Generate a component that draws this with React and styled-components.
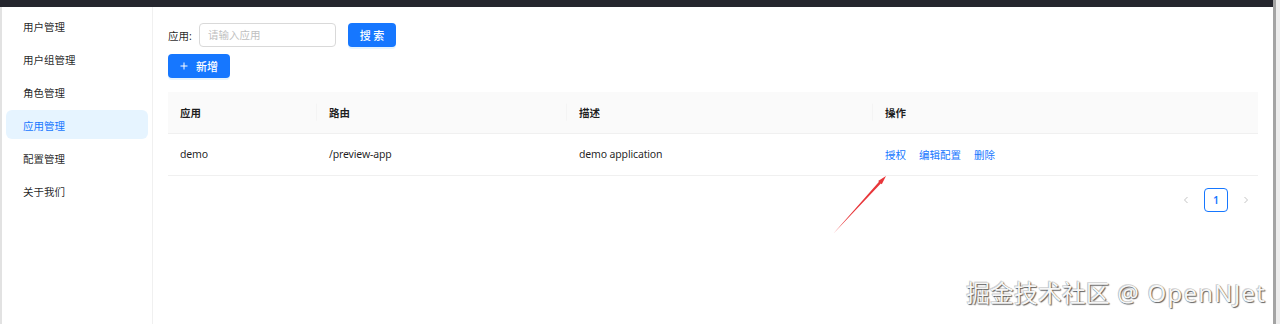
import React from "react";
import styled, { createGlobalStyle } from "styled-components";

const Global = createGlobalStyle`
  html, body { margin: 0; padding: 0; background: #fff; }
  body {
    font-family: "Noto Sans", "Noto Sans CJK SC", sans-serif;
    font-size: 10.5px;
    color: rgba(0,0,0,0.88);
  }
  * { box-sizing: border-box; }
`;

const Screen = styled.div`
  position: relative;
  display: flex;
  width: 1280px;
  height: 324px;
  overflow: hidden;
`;

const Window = styled.div`
  width: 1273px;
  display: flex;
  flex-direction: column;
`;

const RightEdge = styled.div`
  width: 7px;
  border-left: 3px solid #a4a4a4;
  background: #ededed;
`;

const TopBar = styled.div`
  height: 7px;
  background: #25262e;
`;

const Body = styled.div`
  flex: 1;
  display: flex;
  border-left: 2px solid #e2e2e2;
`;

const Sidebar = styled.nav`
  width: 151px;
  border-right: 1px solid #f0f0f0;
  padding: 4px 4px 0;
  display: flex;
  flex-direction: column;
  gap: 4px;
`;

const MenuItem = styled.div`
  height: 29px;
  display: flex;
  align-items: center;
  padding: 1px 0 0 17px;
  border-radius: 6px;
  font-size: 10.5px;
  color: ${(p) => (p.$active ? "#1677ff" : "rgba(0,0,0,0.88)")};
  background: ${(p) => (p.$active ? "#e6f4ff" : "transparent")};
`;

const Main = styled.main`
  flex: 1;
  padding: 16px 15px 0;
  display: flex;
  flex-direction: column;
`;

const SearchRow = styled.div`
  display: flex;
  align-items: center;
  height: 24px;
`;

const Label = styled.label`
  font-size: 10.5px;
  width: 31px;
  color: rgba(0,0,0,0.88);
`;

const Input = styled.div`
  width: 137px;
  height: 24px;
  border: 1px solid #d9d9d9;
  border-radius: 4px;
  padding-left: 8px;
  line-height: 22px;
  color: #bfbfbf;
  font-size: 10.5px;
`;

const Button = styled.button`
  display: inline-flex;
  align-items: center;
  justify-content: center;
  gap: 8px;
  height: 24px;
  width: ${(p) => p.$w}px;
  margin-left: ${(p) => p.$ml || 0}px;
  border: none;
  border-radius: 4px;
  background: #1677ff;
  color: #fff;
  font-family: "Noto Sans CJK SC", sans-serif;
  font-size: 11px;
  font-weight: 500;
  padding: 0;
  box-shadow: 0 2px 0 rgba(5,145,255,0.1);
`;

const AddRow = styled.div`
  margin-top: 7px;
  display: flex;
`;

const Table = styled.table`
  margin-top: 14px;
  width: 1090px;
  border-collapse: collapse;
  table-layout: fixed;
`;

const Th = styled.th`
  position: relative;
  height: 41px;
  padding: 0 12px;
  text-align: left;
  background: #fafafa;
  border-bottom: 1px solid #f0f0f0;
  font-weight: 600;
  font-size: 10.5px;
  color: rgba(0,0,0,0.88);
  &:not(:last-child)::before {
    content: "";
    position: absolute;
    right: 0;
    top: 50%;
    width: 1px;
    height: 1.6em;
    transform: translateY(-50%);
    background: #f4f4f4;
  }
`;

const Td = styled.td`
  height: 42px;
  padding: 0 12px;
  border-bottom: 1px solid #f0f0f0;
  font-size: 10.5px;
  letter-spacing: -0.15px;
  color: rgba(0,0,0,0.88);
`;

const Actions = styled.div`
  display: flex;
  gap: 13px;
  letter-spacing: 0;
`;

const Link = styled.a`
  color: #1677ff;
  text-decoration: none;
  font-size: 10.5px;
`;

const Pager = styled.div`
  margin-top: 12px;
  width: 1090px;
  display: flex;
  justify-content: flex-end;
  gap: 6px;
`;

const PageBtn = styled.div`
  width: 24px;
  height: 24px;
  display: flex;
  align-items: center;
  justify-content: center;
  border-radius: 4px;
  border: 1px solid ${(p) => (p.$active ? "#1677ff" : "transparent")};
  color: ${(p) => (p.$active ? "#1677ff" : "#c4c4c4")};
  font-weight: 600;
  font-size: 10.5px;
`;

const Watermark = styled.div`
  position: absolute;
  right: 14px;
  top: 279px;
  font-family: "Noto Sans", "Noto Sans CJK SC", sans-serif;
  font-size: 24px;
  line-height: 1.2;
  color: #f6f6f6;
  text-shadow: 1px 1px 1px rgba(0,0,0,0.6), -1px -1px 0 rgba(0,0,0,0.15), 0 0 1px rgba(0,0,0,0.4);
  white-space: nowrap;
`;

const WatermarkLatin = styled.span`
  letter-spacing: 1.2px;
`;

const ArrowSvg = styled.svg`
  position: absolute;
  left: 0;
  top: 0;
  pointer-events: none;
`;

const Chevron = ({ dir }) => (
  <svg width="8" height="8" viewBox="0 0 8 8" fill="none">
    <path
      d={dir === "left" ? "M5.5 1 L2.5 4 L5.5 7" : "M2.5 1 L5.5 4 L2.5 7"}
      stroke="currentColor"
      strokeWidth="1"
    />
  </svg>
);

const PlusIcon = () => (
  <svg width="8" height="8" viewBox="0 0 8 8">
    <path d="M4 0.5 V7.5 M0.5 4 H7.5" stroke="#fff" strokeWidth="1" />
  </svg>
);

const menu = ["用户管理", "用户组管理", "角色管理", "应用管理", "配置管理", "关于我们"];

export default function App() {
  return (
    <>
      <Global />
      <Screen>
        <Window>
          <TopBar />
          <Body>
            <Sidebar>
              {menu.map((m) => (
                <MenuItem key={m} $active={m === "应用管理"}>
                  {m}
                </MenuItem>
              ))}
            </Sidebar>
            <Main>
              <SearchRow>
                <Label>应用:</Label>
                <Input>请输入应用</Input>
                <Button $w={48} $ml={12}>搜 索</Button>
              </SearchRow>
              <AddRow>
                <Button $w={62}>
                  <PlusIcon />
                  新增
                </Button>
              </AddRow>
              <Table>
                <colgroup>
                  <col style={{ width: 149 }} />
                  <col style={{ width: 250 }} />
                  <col style={{ width: 306 }} />
                  <col />
                </colgroup>
                <thead>
                  <tr>
                    <Th>应用</Th>
                    <Th>路由</Th>
                    <Th>描述</Th>
                    <Th>操作</Th>
                  </tr>
                </thead>
                <tbody>
                  <tr>
                    <Td>demo</Td>
                    <Td>/preview-app</Td>
                    <Td>demo application</Td>
                    <Td>
                      <Actions>
                        <Link>授权</Link>
                        <Link>编辑配置</Link>
                        <Link>删除</Link>
                      </Actions>
                    </Td>
                  </tr>
                </tbody>
              </Table>
              <Pager>
                <PageBtn><Chevron dir="left" /></PageBtn>
                <PageBtn $active>1</PageBtn>
                <PageBtn><Chevron dir="right" /></PageBtn>
              </Pager>
            </Main>
          </Body>
        </Window>
        <RightEdge />
        <ArrowSvg width="1280" height="324">
          <polygon
            points="833,234 879.0,181.8 878.1,180.9 886,176 881.8,184.3 880.8,183.4"
            fill="#e8363a"
          />
        </ArrowSvg>
        <Watermark>
          掘金技术社区<WatermarkLatin> @ OpenNJet</WatermarkLatin>
        </Watermark>
      </Screen>
    </>
  );
}
